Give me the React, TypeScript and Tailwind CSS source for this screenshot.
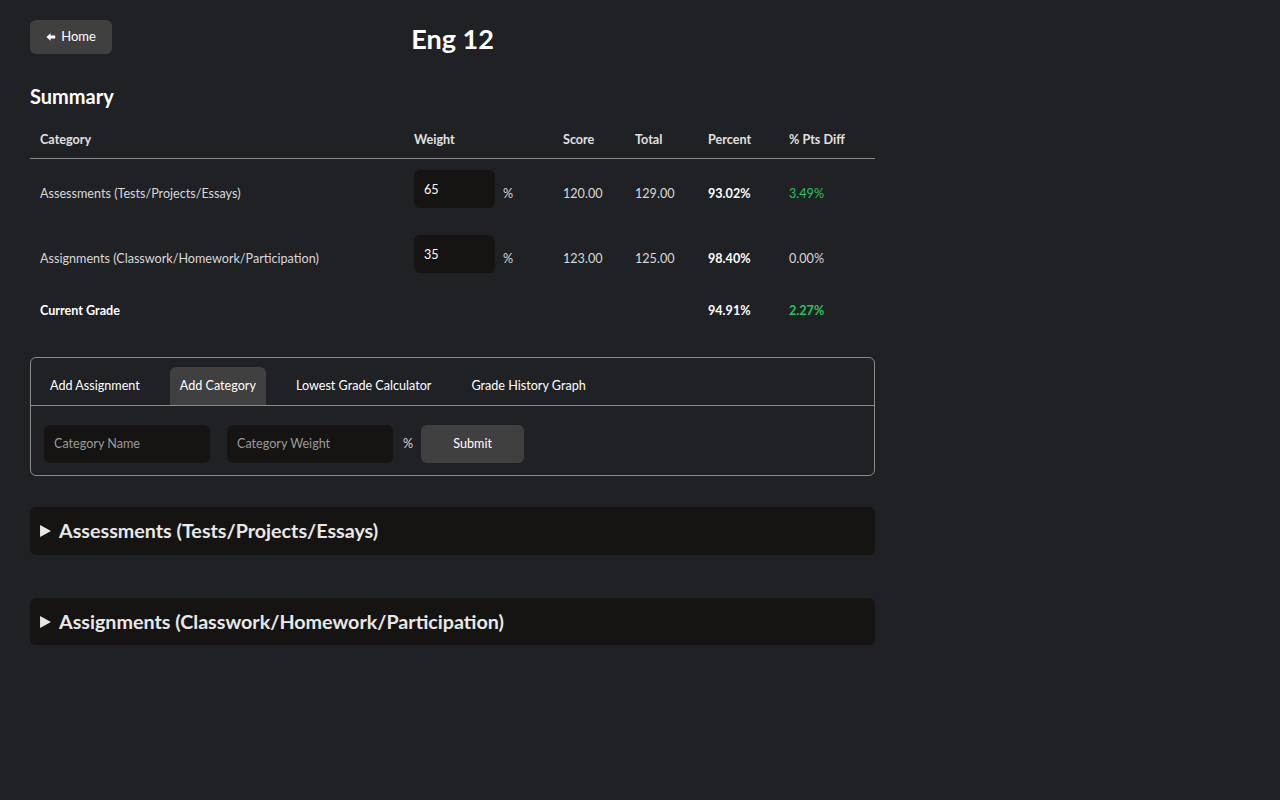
import React from "react";

const font = { fontFamily: 'Lato, "Noto Sans", sans-serif' };

export default function App() {
  const rows = [
    { name: "Assessments (Tests/Projects/Essays)", w: "65", s: "120.00", t: "129.00", p: "93.02%", d: "3.49%", green: true },
    { name: "Assignments (Classwork/Homework/Participation)", w: "35", s: "123.00", t: "125.00", p: "98.40%", d: "0.00%", green: false },
  ];
  return (
    <div className="min-h-[800px] w-full bg-[#202125] text-[#e8e8e8]" style={font}>
      <div className="w-[845px] ml-[30px] pt-[20px]">
        <div className="relative h-[34px]">
          <button className="h-[34px] w-[82px] rounded-[6px] bg-[#404040] text-[13px] text-white flex items-center justify-center gap-[5px]">
            <svg width="10" height="10" viewBox="0 0 12 12" fill="white"><path d="M0.5 6 L5.5 1.5 L5.5 4.3 L11 4.3 L11 7.7 L5.5 7.7 L5.5 10.5 Z" /></svg>
            <span>Home</span>
          </button>
          <div className="absolute left-0 right-0 top-0 text-center text-[27px] font-bold text-white leading-[38px] pointer-events-none">Eng 12</div>
        </div>

        <div className="mt-[30px] text-[20px] font-bold text-white leading-[24px]">Summary</div>

        <div className="mt-[17px] text-[12.6px]">
          <div className="flex h-[34px] items-center border-b border-[#8a8a8a] font-bold text-[#e0e0e0] pb-[2px]">
            <div className="w-[384px] pl-[10px]">Category</div>
            <div className="w-[149px]">Weight</div>
            <div className="w-[72px]">Score</div>
            <div className="w-[73px]">Total</div>
            <div className="w-[81px]">Percent</div>
            <div>% Pts Diff</div>
          </div>
          {rows.map((r, i) => (
            <div key={i} className={`flex h-[65px] items-center pt-[3px] ${i === 0 ? "mt-[1px]" : ""} text-[#d8d8d8]`}>
              <div className="w-[384px] pl-[10px]">{r.name}</div>
              <div className="w-[149px] flex items-center">
                <div className="mb-[11px] h-[38px] w-[81px] rounded-[6px] bg-[#151412] pl-[10px] pt-[11px] text-white">{r.w}</div>
                <span className="ml-[8px]">%</span>
              </div>
              <div className="w-[72px]">{r.s}</div>
              <div className="w-[73px]">{r.t}</div>
              <div className="w-[81px] font-bold text-white">{r.p}</div>
              <div className={r.green ? "text-[#22c55e]" : ""}>{r.d}</div>
            </div>
          ))}
          <div className="flex h-[40px] items-center pt-[2px] font-bold text-white">
            <div className="w-[678px] pl-[10px]">Current Grade</div>
            <div className="w-[81px]">94.91%</div>
            <div className="text-[#22c55e]">2.27%</div>
          </div>
        </div>

        <div className="mt-[27px] rounded-[6px] border border-[#8a8a8a] text-[12.6px]">
          <div className="flex items-end gap-[20px] h-[48px] border-b border-[#8a8a8a] pl-[9px] text-white">
            <div className="h-[38px] px-[10px] flex items-center">Add Assignment</div>
            <div className="h-[38px] px-[10px] flex items-center rounded-t-[6px] bg-[#404040]">Add Category</div>
            <div className="h-[38px] px-[10px] flex items-center">Lowest Grade Calculator</div>
            <div className="h-[38px] px-[10px] flex items-center">Grade History Graph</div>
          </div>
          <div className="flex items-center pt-[19px] pb-[12px] pl-[13px]">
            <div className="h-[38px] w-[166px] rounded-[6px] bg-[#151412] pl-[10px] flex items-center text-[#9a9a9a]">Category Name</div>
            <div className="ml-[17px] h-[38px] w-[166px] rounded-[6px] bg-[#151412] pl-[10px] flex items-center text-[#9a9a9a]">Category Weight</div>
            <span className="ml-[10px] text-[#d8d8d8]">%</span>
            <button className="ml-[8px] h-[38px] w-[103px] rounded-[6px] bg-[#404040] text-white">Submit</button>
          </div>
        </div>

        <div className="mt-[31px] h-[48px] rounded-[6px] bg-[#151412] flex items-center pl-[10px] text-[19.7px] font-bold text-[#e8e8e8]">
          <svg width="11" height="12" viewBox="0 0 10 11" fill="#e8e8e8"><path d="M0 0 L10 5.5 L0 11 Z" /></svg>
          <span className="ml-[8px]">Assessments (Tests/Projects/Essays)</span>
        </div>
        <div className="mt-[43px] h-[47px] rounded-[6px] bg-[#151412] flex items-center pl-[10px] text-[19.7px] font-bold text-[#e8e8e8]">
          <svg width="11" height="12" viewBox="0 0 10 11" fill="#e8e8e8"><path d="M0 0 L10 5.5 L0 11 Z" /></svg>
          <span className="ml-[8px]">Assignments (Classwork/Homework/Participation)</span>
        </div>
      </div>
    </div>
  );
}
